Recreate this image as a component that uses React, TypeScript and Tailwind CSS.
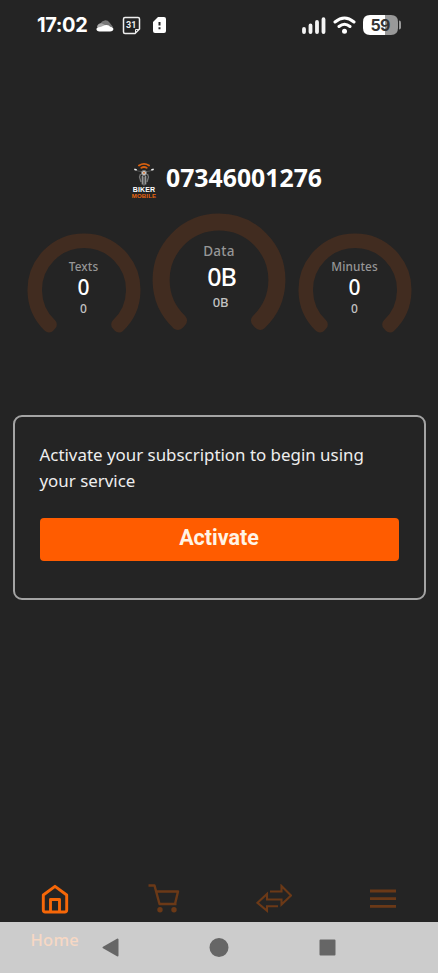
import clsx from "clsx";

const FACE = "font-['Noto_Sans','Open_Sans',sans-serif]";

// ──────────────────────────────────────────────────────────────────
// StatusBar
// Owns: clock, notification icons, signal, wifi and battery level.
// ──────────────────────────────────────────────────────────────────
function StatusBar() {
    return (
        <header className="flex h-[50px] items-center justify-between pl-[37px] pr-[37px] text-white">
            <div className="flex items-center">
                <span className="w-[51px] whitespace-nowrap font-['Inter',sans-serif] text-[20px] font-bold leading-none tracking-[-0.4px]">17:02</span>
                {/* Cloud */}
                <svg className="ml-2 h-[13px] w-[18px]" viewBox="0 0 18 13">
                    <path d="M4.500 4.500A5 4.500 0 0 1 13.500 3.500L17 8H3Z" fill="#777" />
                    <path d="M1 8a4 4 0 0 1 5-3.500L13 8 4 11Z" fill="#aaa" />
                    <path d="M3.500 12.500C-.5 12.500-.5 8.500 3 8.300 6 8 8 6 10.500 6c2 0 3 .8 3.500 1.700 4.500 0 4.500 4.800 0 4.800Z" fill="#fff" />
                </svg>
                {/* Calendar */}
                <svg className="ml-[8px] h-[19px] w-[19px]" viewBox="0 0 19 19" fill="none" stroke="#eee" strokeWidth="1.500">
                    <path d="M3 1.500h13q1.500 0 1.500 1.500v10L13 17.500H3Q1.500 17.500 1.500 16V3Q1.500 1.500 3 1.500Z" />
                    <path d="M13.500 17v-3.500h3.500" strokeWidth="1" />
                    <text x="9.200" y="12.300" textAnchor="middle" fill="#eee" stroke="none" fontFamily="Roboto, sans-serif" fontSize="9" fontWeight="700">31</text>
                </svg>
                {/* SIM alert */}
                <svg className="ml-3 h-4 w-[13px]" viewBox="0 0 13 16">
                    <path d="M5 0h6q2 0 2 2v12q0 2-2 2H2q-2 0-2-2V5Z" fill="#fff" />
                    <path d="M6.500 5v3.500M6.500 10.300v2" stroke="#242424" strokeWidth="2" />
                </svg>
            </div>
            <div className="flex items-center">
                <svg className="h-[17px] w-6" viewBox="0 0 24 17" stroke="#f4f4f4" strokeWidth="3.800" strokeLinecap="round">
                    <path d="M2 12v3M8.500 8.500V15M15 5v10M21.500 2.200V15" />
                </svg>
                <svg className="ml-[7px] h-[18px] w-[23px]" viewBox="0 0 23 18" fill="none" stroke="#fff" strokeWidth="3" strokeLinecap="round">
                    <path d="M2 6Q11.500-2 21 6M6 10.500q5.500-4.500 11 0" />
                    <circle cx="11.500" cy="15.300" r="2.500" fill="#fff" stroke="none" />
                </svg>
                <svg className="ml-[7px] h-5 w-[38px]" viewBox="0 0 38 20">
                    <path d="M7 0h16v20H7Q0 20 0 13V7Q0 0 7 0Z" fill="#fff" />
                    <path d="M22 0h6q7 0 7 7v6q0 7-7 7h-6Z" fill="#999" />
                    <path d="M36 5.500q2 0 2 2v5q0 2-2 2Z" fill="#999" />
                    <text x="17.200" y="15.700" textAnchor="middle" fill="#333" fontFamily="Inter, sans-serif" fontSize="16" fontWeight="700" letterSpacing="-.5">59</text>
                </svg>
            </div>
        </header>
    );
}

// Motorbike seen from the front under a wifi mark, with the wordmark below
function BrandLogo() {
    return (
        <div className="flex h-[36px] w-[26px] flex-col items-center font-['Liberation_Sans',sans-serif] font-bold">
            <svg className="h-[25px] w-[26px] shrink-0" viewBox="0 0 26 24" fill="none">
                <g stroke="#d8600f" strokeWidth="1.900" strokeLinecap="round">
                    <path d="M8 3Q13-.3 18 3M10.400 5.300q2.600-1.600 5.200 0" />
                </g>
                <path d="M4 7l3 1.500 3 .5h6l3-.5 3-1.500" stroke="#666" strokeWidth=".7" />
                <path d="M3.300 6.700l2.400.8M22.700 6.700l-2.400.8" stroke="#eee" strokeWidth="1.600" />
                <circle cx="13" cy="10.500" r="2.600" fill="#c8c8c8" stroke="#777" />
                <path d="M9.500 11.500l-1 3 1.500 5M16.500 11.500l1 3-1.500 5" stroke="#777" strokeWidth="1.300" />
                <path d="M11.300 13.500v8.500M14.700 13.500v8.500" stroke="#aaa" strokeWidth="1.100" />
                <path d="M13 14v9" stroke="#777" strokeWidth="1.500" />
                <circle cx="13" cy="10.300" r=".9" fill="#d8600f" />
            </svg>
            <span className="text-[7px] leading-[6px] tracking-[0.1px] text-white">BIKER</span>
            <span className="text-[6px] leading-[6px] tracking-[0.2px] text-[#e8650f]">MOBILE</span>
        </div>
    );
}

// ──────────────────────────────────────────────────────────────────
// Gauge
// Owns: the three-quarter ring and the label / value / total stack.
// ──────────────────────────────────────────────────────────────────
function Gauge({ label, value, total, large = false }: {
    label: string;
    value: string;
    total: string;
    large?: boolean;
}) {
    return (
        <div className={clsx("grid shrink-0", large ? "h-[134px] w-[134px]" : "mt-5 h-[114px] w-[114px]")}>
            <svg className="col-start-1 row-start-1 h-full w-full" viewBox="0 0 114 114">
                <path
                    d="M22 93.800A50.800 50.800 0 1 1 92 93.800L89.900 91.500A47.700 47.700 0 1 0 24.100 91.500Z"
                    fill="#412c20"
                    stroke="#412c20"
                    strokeWidth="11.400"
                    strokeLinejoin="round"
                />
            </svg>
            <div className={clsx("col-start-1 row-start-1 flex flex-col items-center", large ? "pt-[29px]" : "pt-[24px]")}>
                <span className={clsx("font-medium text-[#969696]", large ? "text-[13.5px] leading-[19px] tracking-[0.3px]" : "text-[11.8px] leading-[18px] tracking-[0.1px]")}>{label}</span>
                <span className={clsx("font-medium text-white", large ? "pl-[5px] text-[25px] leading-[31px] tracking-[-1px]" : "text-[21px] leading-[25px]")}>{value}</span>
                <span className={clsx("font-medium text-[#c2c2c2]", large ? "pl-[3px] text-[13px] leading-[20px] tracking-[-0.3px]" : "text-[12px] leading-[18px]")}>{total}</span>
            </div>
        </div>
    );
}

function ActivateCard() {
    return (
        <section className="mx-[12.5px] mt-[67.5px] h-[185.5px] rounded-[9px] border-2 border-[#a4a4a4] px-[25px] pt-[25px]">
            <p className="whitespace-nowrap text-[16.9px] leading-[26px] text-[#eeeeee]">
                Activate your subscription to begin using<br />your service
            </p>
            <button type="button" className="mt-6 h-[43px] w-full rounded bg-[#ff5c00] pb-[2px] font-['Roboto',sans-serif] text-[21.5px] font-bold text-[#fff4e6]">
                Activate
            </button>
        </section>
    );
}

function TabBar() {
    return (
        <nav className="grid h-[53px] grid-cols-4 justify-items-center text-[#6b3917]">
            <svg className="mt-[15px] h-[30px] w-[28px] text-[#f66708]" viewBox="0 0 28 30" fill="none" stroke="currentColor" strokeWidth="2.900" strokeLinejoin="round">
                <path d="M2.300 11L14 2.300 25.700 11V26q0 2-2 2H4.300q-2 0-2-2Z" />
                <path d="M9.500 28V15.500h9V28" />
            </svg>
            <svg className="mt-[14px] h-[30px] w-8" viewBox="0 0 32 30" fill="none" stroke="currentColor" strokeWidth="2.400" strokeLinejoin="round">
                <path d="M.500 2.500H6.500l5 18.500h17M8.500 8.500H30l-3 12.500" />
                <circle cx="12" cy="26.800" r="2.700" fill="currentColor" stroke="none" />
                <circle cx="26" cy="26.800" r="2.700" fill="currentColor" stroke="none" />
            </svg>
            <svg className="mt-[15px] h-[30px] w-[36px]" viewBox="0 0 36 30" fill="none" stroke="currentColor" strokeWidth="2.100">
                <path d="M14 7.500h11.500V2L35 11.500l-9.500 9v-5H11V10L1.500 18.800l9.500 8v-4.500h11" />
            </svg>
            <svg className="mt-[20px] h-5 w-[26px]" viewBox="0 0 26 20" stroke="currentColor" strokeWidth="2.800">
                <path d="M0 2h26M0 9.700h26M0 17.400h26" />
            </svg>
        </nav>
    );
}

function SystemBar() {
    return (
        <footer className="grid h-[51px] bg-[#cccccc]">
            <div className="col-start-1 row-start-1 grid grid-cols-4 justify-items-center pt-[6px] text-[16.500px] font-medium leading-[24px]">
                <span className="tracking-[0.2px] text-[#f7d8c4]">Home</span>
            </div>
            <div className="col-start-1 row-start-1 flex items-center justify-center text-[#666666]">
                <svg className="h-[19px] w-[235px]" viewBox="0 0 235 19" fill="currentColor" stroke="currentColor" strokeWidth="2" strokeLinejoin="round">
                    <path d="M1.500 9.500L15.500 1.500v16Z" />
                    <circle cx="117" cy="9.500" r="8.500" />
                    <path d="M218.500 2.500h14v14h-14Z" />
                </svg>
            </div>
        </footer>
    );
}

export default function App() {
    return (
        <div className={clsx("flex h-[973px] w-[438px] flex-col overflow-hidden bg-[#242424]", FACE)}>
            <StatusBar />
            <div className="mt-[112px] flex h-9 items-center pl-[131px]">
                <BrandLogo />
                <h1 className="mb-[6px] ml-[9px] text-[24.8px] font-bold leading-none text-white">07346001276</h1>
            </div>
            <div className="mt-[15px] flex items-start justify-center gap-[11.5px]">
                <Gauge label="Texts" value="0" total="0" />
                <Gauge label="Data" value="0B" total="0B" large />
                <Gauge label="Minutes" value="0" total="0" />
            </div>
            <ActivateCard />
            <div className="flex-1" />
            <TabBar />
            <SystemBar />
        </div>
    );
}
